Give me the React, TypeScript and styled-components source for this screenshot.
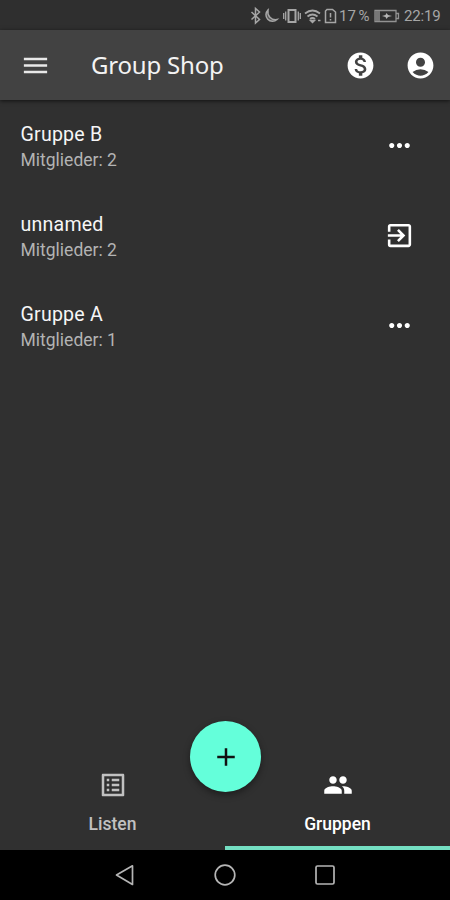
import React from 'react';
import styled, { createGlobalStyle } from 'styled-components';
import {
  MdMenu, MdMonetizationOn, MdAccountCircle, MdMoreHoriz, MdExitToApp, MdListAlt, MdPeople, MdAdd,
} from 'react-icons/md';

const GlobalStyle = createGlobalStyle`
  * { box-sizing: border-box; }
  body { margin: 0; background: #303030; font-family: Roboto, "Liberation Sans", sans-serif; }
  button { border: 0; padding: 0; margin: 0; background: none; color: inherit; font: inherit; }
  svg { display: block; flex: none; }
`;

const Screen = styled.div`
  width: 450px;
  height: 900px;
  display: flex;
  flex-direction: column;
  overflow: hidden;
  background: #303030;
  color: #fff;
`;

const StatusBar = styled.div`
  height: 30px;
  flex: none;
  display: flex;
  align-items: center;
  justify-content: flex-end;
  padding: 2px 9px 0 0;
  background: #2f2f2f;
  color: #a6a6a6;
  font-size: 15px;
  line-height: 20px;
  white-space: nowrap;
`;

const Percent = styled.span`
  width: 31px;
  margin: 0 3px 0 1px;
  font-size: 15px;
  word-spacing: -1px;
`;

const Clock = styled.span`
  width: 37px;
  margin-left: 4px;
  letter-spacing: -0.15px;
`;

const AppBar = styled.header`
  height: 70px;
  flex: none;
  display: flex;
  align-items: center;
  padding: 0 14px 0 20px;
  background: #424242;
  box-shadow: 0 1px 4px rgba(0, 0, 0, 0.65);
  z-index: 1;
`;

const Title = styled.h1`
  margin: 0 auto 0 40px;
  font: 400 24px/32px "Noto Sans", "Open Sans", sans-serif;
  letter-spacing: -0.2px;
  color: #f3f3f3;
  white-space: nowrap;
`;

const IconButton = styled.button<{ $gap?: number }>`
  display: flex;
  align-items: center;
  justify-content: center;
  margin-left: ${({ $gap = 0 }) => $gap}px;
`;

const GroupList = styled.main`
  flex: 1;
  display: flex;
  flex-direction: column;
`;

const GroupRow = styled.div`
  height: 90px;
  display: flex;
  align-items: center;
  justify-content: space-between;
  padding: 0 35px 0 20.5px;
`;

const GroupText = styled.div`
  padding-top: 4px;
`;

const GroupName = styled.div`
  font-size: 19.6px;
  line-height: 26px;
  letter-spacing: 0.2px;
  color: #f6f6f6;
`;

const Members = styled.div`
  font-size: 17.5px;
  line-height: 25px;
  color: #b3b3b3;
`;

const Tabs = styled.nav`
  height: 90px;
  flex: none;
  display: grid;
  grid-template-columns: 1fr 1fr;
  position: relative;
`;

const Tab = styled.button<{ $active?: boolean }>`
  display: flex;
  flex-direction: column;
  align-items: center;
  padding-top: 10px;
  gap: 12px;
  color: ${({ $active }) => ($active ? '#fff' : '#c1c1c1')};
  border-bottom: 4px solid ${({ $active }) => ($active ? '#74dfc2' : 'transparent')};
  font-size: 17.5px;
  font-weight: 500;
  line-height: 24px;
`;

const AddButton = styled.button`
  position: absolute;
  left: 190px;
  top: -39px;
  width: 71px;
  height: 71px;
  border-radius: 50%;
  display: flex;
  align-items: center;
  justify-content: center;
  background: #64ffda;
  color: #111;
  box-shadow: 0 3px 7px rgba(0, 0, 0, 0.4);
`;

const SystemNav = styled.footer`
  height: 50px;
  flex: none;
  display: flex;
  align-items: center;
  justify-content: center;
  gap: 76px;
  background: #000;
`;

const StatusIcons = () => (
  <svg width="88" height="20" viewBox="0 0 88 20" fill="none" stroke="#a6a6a6" strokeWidth="1.5">
    <path d="M1.500 6l8 7.500-4 3.500V2.500L9.500 6l-8 7.500" />
    <path d="M19 4a6.500 6.500 0 1 0 9 9.500c-6 1-10-4-9-9.500z" fill="#a6a6a6" fillOpacity=".35" transform="translate(-1 0)" />
    <path d="M38.500 4h7v12h-7z" strokeWidth="2" />
    <path d="M35.700 5.500v9M48.300 5.500v9M33.700 7v6M50.300 7v6" strokeWidth="1.300" />
    <path d="M55 7.500q7.500-6 15 0M57.500 10.500q5-4 10 0M60 13q2.500-2 5 0" strokeWidth="1.800" />
    <path d="M60.500 14.500l2 2 2-2z" fill="#a6a6a6" />
    <path d="M68 14.500h2.500" />
    <path d="M77 3.500h5.500l3 2.500v10.500H75.500V5zM80.500 7v4.500M80.500 13v1.500" />
  </svg>
);

const Battery = () => (
  <svg width="27" height="14" viewBox="0 0 27 14">
    <path d="M2 1.500h21v11H2zM23 4.500h2.500v5H23" fill="none" stroke="#929292" strokeWidth="1.300" />
    <path d="M2 2h5v10H2z" fill="#777" />
    <path d="M9 7l3.500-1 1-2 1.500 2 4 1-4 1-1.500 2-1-2z" fill="#b5b5b5" />
  </svg>
);

const groups = [
  { name: 'Gruppe B', members: 2, Icon: MdMoreHoriz },
  { name: 'unnamed', members: 2, Icon: MdExitToApp },
  { name: 'Gruppe A', members: 1, Icon: MdMoreHoriz },
];

export default function App() {
  return (
    <>
      <GlobalStyle />
      <Screen>
        <StatusBar>
          <StatusIcons />
          <Percent>17 %</Percent>
          <Battery />
          <Clock>22:19</Clock>
        </StatusBar>
        <AppBar>
          <IconButton aria-label="Menu"><MdMenu size={31} color="#e9e9e9" /></IconButton>
          <Title>Group Shop</Title>
          <IconButton aria-label="Payments"><MdMonetizationOn size={31} /></IconButton>
          <IconButton aria-label="Account" $gap={29}><MdAccountCircle size={31} /></IconButton>
        </AppBar>
        <GroupList>
          {groups.map(({ name, members, Icon }) => (
            <GroupRow key={name}>
              <GroupText>
                <GroupName>{name}</GroupName>
                <Members>Mitglieder: {members}</Members>
              </GroupText>
              <IconButton aria-label={name}><Icon size={31} /></IconButton>
            </GroupRow>
          ))}
        </GroupList>
        <Tabs>
          <Tab><MdListAlt size={30} />Listen</Tab>
          <Tab $active><MdPeople size={30} />Gruppen</Tab>
          <AddButton aria-label="Add"><MdAdd size={30} /></AddButton>
        </Tabs>
        <SystemNav>
          <svg width="24" height="24" viewBox="0 0 24 24" fill="none" stroke="#b5b5b5" strokeWidth="1.700" strokeLinejoin="round">
            <path d="M3.500 12L19.500 2.800v18.600z" />
          </svg>
          <svg width="24" height="24" viewBox="0 0 24 24" fill="none" stroke="#b5b5b5" strokeWidth="1.700">
            <circle cx="12" cy="12" r="9.800" />
          </svg>
          <svg width="24" height="24" viewBox="0 0 24 24" fill="none" stroke="#b5b5b5" strokeWidth="1.700">
            <rect x="3" y="3" width="18" height="18" rx="1.500" />
          </svg>
        </SystemNav>
      </Screen>
    </>
  );
}
